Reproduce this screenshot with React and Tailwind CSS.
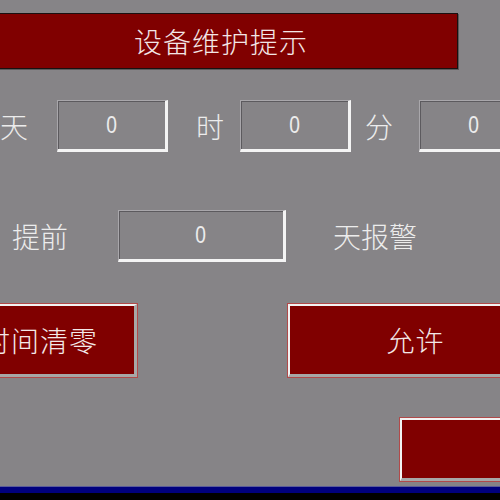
import React from "react";

const cjk = { fontFamily: '"Noto Sans CJK SC", "Noto Sans", sans-serif' };

function Box({ w, ml }) {
  return (
    <div
      className={`${w} ${ml} h-[52px] shrink-0 border-t border-l border-[#a9a7ab] border-b-[3px] border-r-[3px] border-b-[#f4f4f4] border-r-[#f4f4f4] shadow-[inset_1px_1px_0_#5c5a5e] flex items-center justify-center`}
    >
      <span className="text-[24px] text-[#ececec] leading-none font-light inline-block scale-x-[0.8]" style={{ fontFamily: '"Liberation Sans", sans-serif' }}>
        0
      </span>
    </div>
  );
}

function Button({ cls, label }) {
  return (
    <div className={`${cls} shrink-0 border border-[#b04a4a] bg-[#8a2020]`}>
      <div className="w-full h-full border-t-2 border-l-2 border-t-[#f2f2f2] border-l-[#f2f2f2] border-b-[3px] border-r-[3px] border-b-[#a7a7a7] border-r-[#a7a7a7] bg-[#800000] flex items-center justify-center">
        <span className="text-[28px] text-[#f3e8e8] leading-none tracking-[1px] font-light" style={cjk}>
          {label}
        </span>
      </div>
    </div>
  );
}

export default function App() {
  return (
    <div className="w-[500px] h-[500px] bg-[#868487] overflow-hidden flex flex-col font-light" style={cjk}>
      <div className="mt-[13px] ml-[-10px] w-[468px] h-[56px] shrink-0 border border-[#1a1010] shadow-[1px_1px_0_#5a5a5a] bg-[#800000] flex items-center justify-center">
        <span className="text-[28px] text-[#f3e6e6] leading-none tracking-[1px] mr-[6px]">设备维护提示</span>
      </div>

      <div className="mt-[31px] flex items-center h-[52px]">
        <span className="text-[28px] text-[#ececec] leading-none ml-[0px] w-[28px]">天</span>
        <Box w="w-[111px]" ml="ml-[29px]" />
        <span className="text-[28px] text-[#ececec] leading-none ml-[28px] w-[28px]">时</span>
        <Box w="w-[111px]" ml="ml-[16px]" />
        <span className="text-[28px] text-[#ececec] leading-none ml-[14px] w-[28px]">分</span>
        <Box w="w-[111px]" ml="ml-[26px]" />
      </div>

      <div className="mt-[58px] flex items-center h-[52px]">
        <span className="text-[28px] text-[#ececec] leading-none ml-[12px] w-[57px]">提前</span>
        <Box w="w-[168px]" ml="ml-[49px]" />
        <span className="text-[28px] text-[#ececec] leading-none ml-[47px]">天报警</span>
      </div>

      <div className="mt-[41px] flex items-start h-[75px]">
        <Button cls="ml-[-57px] w-[195px] h-[75px]" label="时间清零" />
        <Button cls="ml-[149px] w-[258px] h-[75px]" label="允许" />
      </div>

      <div className="mt-[39px] flex">
        <Button cls="ml-[399px] w-[272px] h-[65px]" label="返回" />
      </div>

      <div className="mt-auto h-[14px] shrink-0 flex flex-col">
        <div className="h-[1px] bg-[#5a5c9a]" />
        <div className="h-[6px] bg-[#00007e]" />
        <div className="flex-1 bg-black" />
      </div>
    </div>
  );
}
